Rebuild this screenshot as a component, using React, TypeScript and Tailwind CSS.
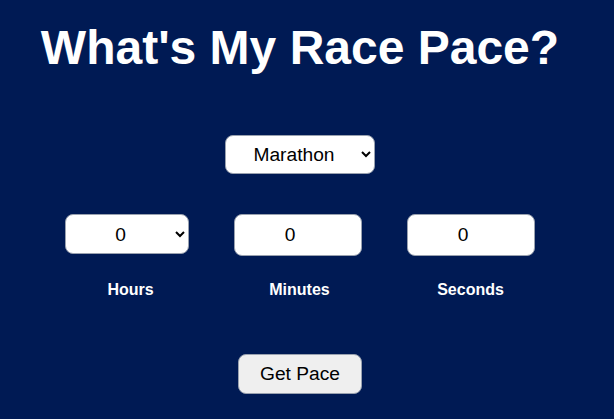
import { useState } from "react";

export default function App() {
  const [race, setRace] = useState("marathon");
  const [hours, setHours] = useState("0");
  const [minutes, setMinutes] = useState("0");
  const [seconds, setSeconds] = useState("0");

  return (
    <div className="w-full min-h-screen bg-[#001a54] text-white font-['Liberation_Sans',Arial,sans-serif] flex flex-col items-center pr-[14px]">
      <h1 className="mt-[21px] text-[48px] leading-[54px] font-bold">What's My Race Pace?</h1>

      <select
        value={race}
        onChange={(e) => setRace(e.target.value)}
        className="mt-[60px] w-[150px] h-[39px] bg-white text-black text-[19.2px] text-center rounded-lg border border-gray-400 px-2 outline-none"
      >
        <option value="5k">5K</option>
        <option value="10k">10K</option>
        <option value="half">Half Marathon</option>
        <option value="marathon">Marathon</option>
      </select>

      {/* time inputs */}
      <div className="mt-[40px] grid grid-cols-3 w-[507px]">
        <div className="flex flex-col items-start pl-[18px]">
          <select
            value={hours}
            onChange={(e) => setHours(e.target.value)}
            className="w-[124px] h-[40px] bg-white text-black text-[19.2px] text-center rounded-lg border border-gray-400 px-2 outline-none"
          >
            {[0, 1, 2, 3, 4, 5, 6].map((h) => (
              <option key={h} value={h}>{h}</option>
            ))}
          </select>
          <span className="mt-[24px] w-[124px] pl-[8px] text-center text-base font-bold">Hours</span>
        </div>
        <div className="flex flex-col items-start pl-[18px]">
          <input
            type="number"
            value={minutes}
            onChange={(e) => setMinutes(e.target.value)}
            className="w-[128px] h-[42px] bg-white text-black text-[19.2px] text-center rounded-lg border border-gray-400 outline-none"
          />
          <span className="mt-[22px] w-[128px] pl-[4px] text-center text-base font-bold">Minutes</span>
        </div>
        <div className="flex flex-col items-start pl-[22px]">
          <input
            type="number"
            value={seconds}
            onChange={(e) => setSeconds(e.target.value)}
            className="w-[128px] h-[42px] bg-white text-black text-[19.2px] text-center rounded-lg border border-gray-400 outline-none"
          />
          <span className="mt-[22px] w-[128px] text-center text-base font-bold">Seconds</span>
        </div>
      </div>

      <button
        type="button"
        className="mt-[52px] w-[124px] h-[40px] bg-[#efefef] text-black text-[19.2px] rounded-lg border border-gray-400"
      >
        Get Pace
      </button>
    </div>
  );
}
